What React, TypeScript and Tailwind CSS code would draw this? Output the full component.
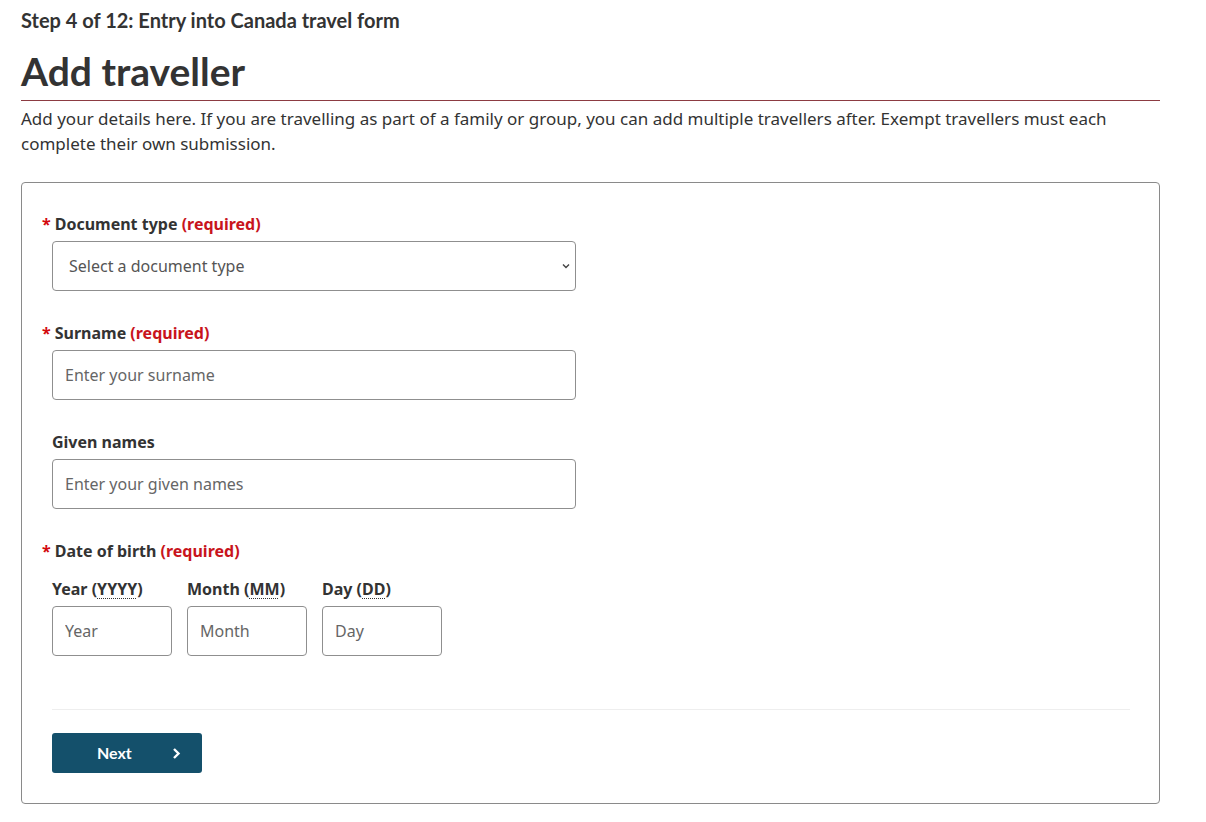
import React from "react";

const heading = { fontFamily: "Lato, 'Noto Sans', sans-serif" };
const body = { fontFamily: "'Noto Sans', 'Open Sans', sans-serif" };

function Label({ text, required }: { text: string; required?: boolean }) {
  return (
    <label className="block text-[16px] leading-[24px] font-bold text-[#333]">
      {required && <span className="-ml-[10px] mr-[4px] text-[#d3080c]">*</span>}
      {text}
      {required && <span className="text-[#c8141c]"> (required)</span>}
    </label>
  );
}

function TextInput({ placeholder, className }: { placeholder: string; className?: string }) {
  return (
    <input
      placeholder={placeholder}
      className={
        "h-[50px] rounded-[4px] border border-[#8f8f8f] bg-white px-[12px] text-[16px] text-[#333] placeholder:text-[#666] outline-none " +
        (className ?? "")
      }
      style={body}
    />
  );
}

function DatePart({ label, abbr, placeholder }: { label: string; abbr: string; placeholder: string }) {
  return (
    <div className="flex flex-col gap-[5px]">
      <span className="text-[16px] leading-[24px] font-bold text-[#333]">
        {label} (
        <abbr className="underline decoration-dotted decoration-1 underline-offset-[3px]" title={label}>
          {abbr}
        </abbr>
        )
      </span>
      <TextInput placeholder={placeholder} className="w-[120px]" />
    </div>
  );
}

export default function App() {
  return (
    <div className="min-h-screen bg-white px-[21px] pt-[7px] text-[#333]" style={body}>
      <div className="w-[1139px]">
        <p className="text-[20px] leading-[26px] font-bold text-[#333]" style={heading}>
          Step 4 of 12: Entry into Canada travel form
        </p>
        <h1
          className="mt-[14px] border-b border-[#8c3b42] pb-[5px] text-[39px] leading-[48px] font-bold text-[#333]"
          style={heading}
        >
          Add traveller
        </h1>
        <p className="mt-[5px] text-[17px] leading-[25px] text-[#333]">
          Add your details here. If you are travelling as part of a family or group, you can add multiple travellers
          after. Exempt travellers must each complete their own submission.
        </p>

        <form className="mt-[26px] rounded-[4px] border border-[#8a8a8a] px-[30px] pt-[29px] pb-[30px]">
          <div className="flex flex-col gap-[5px]">
            <Label text="Document type" required />
            <div className="relative w-[524px]">
              <select
                className="h-[50px] w-full appearance-none rounded-[4px] border border-[#8f8f8f] bg-white pl-[16px] text-[16px] text-[#555] outline-none"
                style={body}
                defaultValue=""
              >
                <option value="">Select a document type</option>
              </select>
              <svg
                className="pointer-events-none absolute right-[6px] top-[21px]"
                width="8"
                height="8"
                viewBox="0 0 8 8"
              >
                <path d="M1 2.5 L4 5.5 L7 2.5" fill="none" stroke="#444" strokeWidth="1.4" />
              </svg>
            </div>
          </div>

          <div className="mt-[30px] flex flex-col gap-[5px]">
            <Label text="Surname" required />
            <TextInput placeholder="Enter your surname" className="w-[524px]" />
          </div>

          <div className="mt-[30px] flex flex-col gap-[5px]">
            <Label text="Given names" />
            <TextInput placeholder="Enter your given names" className="w-[524px]" />
          </div>

          <div className="mt-[30px]">
            <Label text="Date of birth" required />
            <div className="mt-[14px] flex gap-[15px]">
              <DatePart label="Year" abbr="YYYY" placeholder="Year" />
              <DatePart label="Month" abbr="MM" placeholder="Month" />
              <DatePart label="Day" abbr="DD" placeholder="Day" />
            </div>
          </div>

          <hr className="mt-[53px] w-[1078px] border-t border-[#eeeeee]" />

          <button
            type="button"
            className="mt-[23px] flex h-[40px] w-[150px] items-center rounded-[3px] bg-[#14506b] pl-[45px] text-[16px] font-bold text-white"
            style={heading}
          >
            <span>Next</span>
            <svg className="ml-[40px]" width="9" height="13" viewBox="0 0 9 13">
              <path d="M2 2 L6.5 6.5 L2 11" fill="none" stroke="white" strokeWidth="2.4" />
            </svg>
          </button>
        </form>
      </div>
    </div>
  );
}
